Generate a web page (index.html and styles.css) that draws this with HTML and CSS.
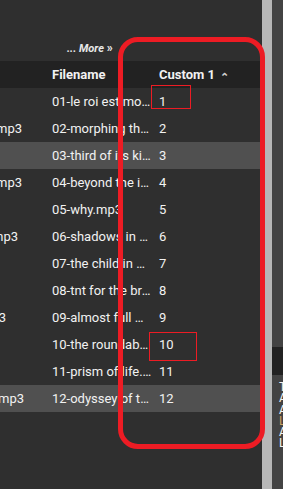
FILE: index.html
```html
<!DOCTYPE html>
<html lang="en">
<head>
     <meta charset="UTF-8">
     <meta name="viewport" content="width=device-width, initial-scale=1.0">
     <title>Tracks</title>
     <link rel="stylesheet" href="styles.css">
</head>
<body>
     <div class="wrapper">
          <div class="main">
               <div class="toolbar">
                    <a class="more">... More <span class="chev">&raquo;</span></a>
               </div>
               <div class="grid">
                    <div class="row head">
                         <div class="cell c-path"></div>
                         <div class="cell c-name">Filename</div>
                         <div class="cell c-custom">Custom 1 <span class="sort">&#8963;</span></div>
                    </div>
                    <div class="row"><div class="cell c-path"></div><div class="cell c-name">01-le roi est mort, vive le roi.mp3</div><div class="cell c-custom"><span class="edit e1">1</span></div></div>
                    <div class="row"><div class="cell c-path"><span class="tail t22">mp3</span></div><div class="cell c-name">02-morphing the shades.mp3</div><div class="cell c-custom">2</div></div>
                    <div class="row sel"><div class="cell c-path"></div><div class="cell c-name">03-third of its kind.mp3</div><div class="cell c-custom">3</div></div>
                    <div class="row"><div class="cell c-path"><span class="tail t22">mp3</span></div><div class="cell c-name">04-beyond the invisible.mp3</div><div class="cell c-custom">4</div></div>
                    <div class="row"><div class="cell c-path"></div><div class="cell c-name">05-why.mp3</div><div class="cell c-custom">5</div></div>
                    <div class="row"><div class="cell c-path"><span class="tail t18">mp3</span></div><div class="cell c-name">06-shadows in silence.mp3</div><div class="cell c-custom">6</div></div>
                    <div class="row"><div class="cell c-path"></div><div class="cell c-name">07-the child in us.mp3</div><div class="cell c-custom">7</div></div>
                    <div class="row"><div class="cell c-path"></div><div class="cell c-name">08-tnt for the brain.mp3</div><div class="cell c-custom">8</div></div>
                    <div class="row"><div class="cell c-path"><span class="tail t6">mp3</span></div><div class="cell c-name">09-almost full moon.mp3</div><div class="cell c-custom">9</div></div>
                    <div class="row"><div class="cell c-path"></div><div class="cell c-name">10-the roundabout.mp3</div><div class="cell c-custom"><span class="edit e10">10</span></div></div>
                    <div class="row"><div class="cell c-path"></div><div class="cell c-name">11-prism of life.mp3</div><div class="cell c-custom">11</div></div>
                    <div class="row sel"><div class="cell c-path"><span class="tail t24">mp3</span></div><div class="cell c-name">12-odyssey of the mind.mp3</div><div class="cell c-custom">12</div></div>
               </div>
               <!-- red marker drawn over the custom column -->
               <div class="marker"></div>
          </div>
          <div class="scrollbar"></div>
          <div class="side">
               <div class="side-top"></div>
               <div class="side-bar"></div>
               <div class="side-info">
                    <div>Title</div>
                    <div>Artist</div>
                    <div>Album</div>
                    <div class="gold">Lyrics</div>
                    <div>Album Artist</div>
                    <div>Length</div>
               </div>
          </div>
     </div>
</body>
</html>
```

FILE: styles.css
```css
*{
     box-sizing: border-box;
}
body{
     margin: 0;
     background: #2f2f2f;
     font-family: Roboto, "Liberation Sans", sans-serif;
     font-size: 13px;
     color: #f2f2f2;
}
.wrapper{
     display: flex;
     height: 489px;
     overflow: hidden;
}
.main{
     position: relative;
     width: 262px;
     flex-shrink: 0;
     background: #2f2f2f;
}
.toolbar{
     height: 61px;
     padding: 40px 0 0 67px;
}
.more{
     font-size: 11px;
     font-weight: bold;
     font-style: italic;
     color: #e8e8e8;
}
.chev{
     font-style: normal;
     font-size: 12px;
}
.row{
     display: flex;
     height: 27px;
     align-items: center;
}
.row.head{
     background: #222222;
     font-weight: bold;
}
.row.sel{
     background: #505050;
}
.cell{
     flex-shrink: 0;
     white-space: nowrap;
     overflow: hidden;
}
.c-path{
     width: 45px;
     display: flex;
     justify-content: flex-end;
}
.tail.t22{ margin-right: 23px; }
.tail.t24{ margin-right: 21px; }
.tail.t18{ margin-right: 27px; }
.tail.t6{ margin-right: 39px; }
.c-name{
     width: 107px;
     padding-left: 7px;
     text-overflow: ellipsis;
}
.c-custom{
     flex: 1;
     padding-left: 7px;
     overflow: visible;
}
.sort{
     font-size: 11px;
     color: #cfcfcf;
     margin-left: 2px;
     position: relative;
     top: 2px;
}
.edit{
     display: inline-block;
     position: relative;
     line-height: 20px;
}
.edit::after{
     content: "";
     position: absolute;
     border: 1px solid #ed1c24;
}
.e1::after{
     left: -8px;
     top: -7px;
     width: 38px;
     height: 22px;
}
.e10::after{
     left: -10px;
     top: -3px;
     width: 46px;
     height: 27px;
}
.marker{
     position: absolute;
     left: 118px;
     top: 37px;
     width: 147px;
     height: 412px;
     border: 5px solid #ed1c24;
     border-radius: 20px;
}
.scrollbar{
     width: 10px;
     flex-shrink: 0;
     background: #b7b7b7;
}
.side{
     flex: 1;
     min-width: 0;
     overflow: hidden;
     background: #434343;
}
.side-top{
     height: 347px;
}
.side-bar{
     height: 28px;
     background: #222222;
}
.side-info{
     padding: 7px 0 0 7px;
     font-size: 12px;
     line-height: 11.3px;
     white-space: nowrap;
}
.gold{
     color: #c8a060;
}
```
